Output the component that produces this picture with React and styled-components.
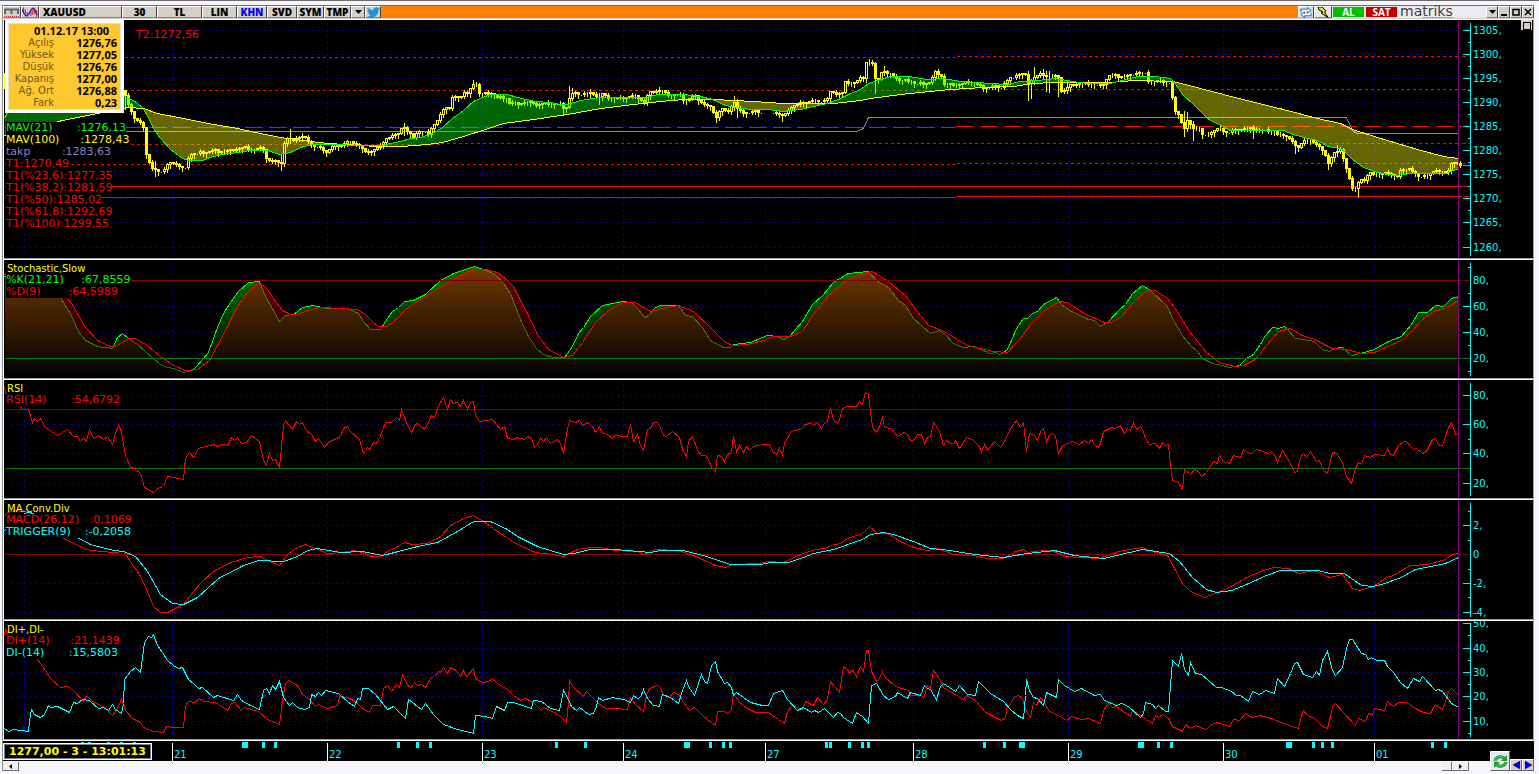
import React from "react";
import styled, { createGlobalStyle } from "styled-components";

const mav21 =
  "4,118 8,110 60,80 120,92 124,96 133,100 142,107 148,117 153,128 160,138 170,149 182,158 188,160 202,160 213,156 222,154 237,152 250,150 267,150 279,154 290,152 303,146 313,144 333,144 360,145 380,145 400,141 410,138 420,137 432,133 442,127 452,118 463,110 473,101 482,97 490,94 507,94 517,97 535,101 550,102 560,104 567,104 580,100 600,97 630,97 645,97 658,94 683,94 700,96 712,99 725,105 740,108 753,109 767,109 783,111 800,109 813,106 827,103 838,99 850,93 860,89 868,83 880,79 890,76 908,76 927,79 943,78 960,81 977,82 990,83 1007,84 1020,81 1037,80 1055,78 1072,81 1087,83 1110,83 1125,79 1138,76 1155,76 1170,78 1175,84 1183,95 1193,104 1200,111 1207,118 1222,126 1230,130 1257,130 1283,130 1293,134 1307,138 1317,140 1327,146 1340,148 1345,152 1352,159 1363,167 1377,172 1395,175 1410,173 1447,173 1452,170 1458,169";
const mav100 =
  "4,135 62,120 97,113 127,107 143,108 157,113 183,118 213,124 237,128 255,132 280,137 310,141 328,143 360,145 377,146 400,146 415,145 427,144 442,142 463,136 482,130 503,123 533,119 567,114 600,108 633,104 660,101 683,99 713,99 753,101 783,103 800,103 833,103 860,100 870,98 900,94 950,89 983,87 1013,86 1033,83 1053,82 1077,82 1110,82 1133,80 1173,81 1200,88 1223,94 1250,101 1283,109 1317,118 1340,123 1352,129 1377,137 1417,149 1443,156 1458,158";
const takp =
  "4,131 856,131 861,129 863,128 868,117 1346,117 1350,126 1353,131 1357,133 1458,133";
const closes =
  "122,92 126,100 129,108 133,118 138,122 142,126 144,150 148,162 150,168 153,170 160,170 164,168 167,163 173,162 178,166 184,168 186,158 189,154 196,153 205,151 212,150 222,151 232,149 243,147 252,149 262,148 264,157 270,161 277,161 281,163 283,143 286,138 292,139 300,136 306,139 311,145 318,147 325,151 331,146 340,144 347,141 354,143 360,146 363,152 370,150 379,146 384,138 390,136 396,134 400,127 403,127 407,133 412,136 415,132 420,131 427,133 430,127 435,122 440,113 443,105 448,108 450,97 455,97 462,95 463,92 468,95 470,83 475,83 477,93 482,93 492,92 495,97 507,97 508,103 532,102 533,105 540,104 547,103 560,104 563,109 567,103 569,93 580,93 593,93 597,97 600,93 605,97 620,98 630,95 637,97 643,102 647,93 655,90 662,90 665,94 678,94 683,100 688,98 693,95 698,100 703,104 710,107 715,116 720,108 725,112 733,102 737,111 747,112 760,111 772,111 777,114 783,116 788,107 800,103 807,101 825,100 830,90 835,93 842,92 843,82 853,82 863,76 865,61 871,63 873,79 878,78 881,68 885,73 893,75 897,80 910,80 913,83 923,83 930,81 933,71 940,75 943,84 960,84 967,81 973,82 980,87 1000,86 1007,80 1013,75 1023,73 1027,82 1033,77 1040,73 1047,76 1057,76 1059,91 1065,90 1067,85 1077,83 1090,83 1100,86 1107,75 1127,76 1133,72 1145,73 1147,80 1170,82 1172,112 1178,113 1182,130 1186,120 1190,127 1198,128 1202,137 1208,132 1217,128 1227,132 1237,129 1247,128 1273,131 1278,136 1283,133 1290,140 1295,148 1302,140 1313,141 1320,148 1327,162 1332,152 1340,150 1343,160 1347,175 1352,192 1355,188 1358,177 1363,180 1368,173 1380,174 1387,172 1397,177 1400,168 1408,168 1413,174 1427,176 1433,169 1445,173 1450,162 1455,162 1459,166";
const spikes = [
  [125, 89, 108], [153, 160, 175], [279, 153, 169], [283, 142, 165], [289, 128, 142],
  [301, 132, 140], [402, 122, 134], [472, 79, 84], [563, 103, 113], [569, 85, 103],
  [572, 87, 95], [588, 88, 94], [598, 92, 103], [657, 86, 91], [714, 110, 121],
  [733, 95, 107], [737, 98, 116], [782, 112, 120], [868, 58, 64], [875, 76, 92],
  [884, 65, 74], [936, 68, 76], [1027, 70, 99], [1030, 78, 97], [1033, 66, 80],
  [1042, 68, 78], [1045, 70, 90], [1049, 70, 91], [1058, 76, 95], [1066, 80, 92],
  [1184, 110, 135], [1187, 111, 125], [1191, 120, 139], [1252, 124, 137],
  [1295, 145, 152], [1327, 155, 168], [1356, 180, 196], [1337, 144, 155],
];

const stochK =
  "4,276 45,283 60,297 65,305 72,317 78,331 85,340 97,346 112,348 117,337 122,333 128,338 137,344 153,358 160,364 167,367 173,368 183,372 192,370 197,365 202,359 208,352 213,338 217,327 223,313 230,302 238,291 248,282 259,281 265,296 272,308 279,321 285,315 293,314 302,307 312,305 327,308 347,308 358,313 363,321 370,329 380,329 385,321 392,311 398,307 404,301 413,300 425,294 440,280 453,273 465,269 474,266 483,269 495,274 503,283 510,293 520,319 528,336 536,348 543,354 553,357 564,357 572,346 578,333 583,327 590,316 602,305 622,301 631,302 638,309 644,317 648,315 655,307 660,305 678,305 685,315 692,316 702,327 710,340 723,347 730,347 733,344 750,342 767,335 777,336 783,339 789,336 802,321 812,304 822,295 833,282 848,273 868,271 877,281 888,287 898,300 905,305 913,318 930,333 939,330 945,334 953,343 963,347 973,346 990,353 995,352 1000,354 1007,349 1011,340 1016,328 1023,318 1027,318 1032,313 1037,311 1043,304 1056,297 1061,304 1069,310 1088,319 1094,320 1100,326 1108,321 1120,308 1125,304 1132,293 1142,285 1150,290 1167,306 1172,318 1182,335 1190,345 1197,351 1202,358 1212,363 1222,365 1229,367 1239,365 1246,358 1253,354 1260,344 1265,335 1272,327 1278,328 1284,326 1288,330 1295,338 1303,339 1314,341 1322,349 1329,351 1334,348 1342,347 1351,355 1357,354 1374,349 1388,341 1401,336 1411,324 1418,312 1427,312 1435,305 1443,306 1451,298 1458,296";
const stochD =
  "4,274 50,283 66,297 72,304 78,315 85,327 97,340 110,346 115,346 128,338 135,338 147,345 160,356 173,365 185,370 197,369 209,360 218,343 227,326 237,306 247,292 258,283 265,286 273,298 282,310 290,314 297,314 307,310 320,307 340,308 357,309 365,314 372,321 378,326 387,326 398,317 405,309 417,301 435,290 453,279 473,269 485,269 497,272 507,280 513,286 520,300 527,313 537,334 548,349 563,357 572,355 582,342 595,322 607,311 622,302 635,302 650,311 667,307 678,305 693,311 710,327 725,342 733,345 747,344 763,340 773,336 790,336 802,331 813,314 827,296 845,281 858,274 872,271 888,281 905,295 913,306 928,325 942,330 967,345 993,351 1007,352 1015,343 1020,338 1030,324 1044,310 1059,301 1067,302 1084,313 1104,322 1111,322 1121,316 1133,302 1145,291 1155,290 1167,298 1177,311 1189,331 1206,352 1219,362 1234,366 1243,365 1255,359 1266,345 1278,331 1290,328 1302,335 1314,339 1332,348 1346,349 1361,353 1374,352 1403,339 1411,331 1421,320 1433,311 1445,308 1458,300";

const rsi =
  "4,387 5,392 7,396 12,405 16,402 20,406 22,409 28,409 32,422 34,418 37,421 40,418 45,427 57,435 67,429 73,436 77,436 80,441 83,437 86,441 89,429 93,438 98,435 103,439 107,436 112,444 115,433 118,425 121,431 125,455 130,467 134,468 140,473 144,487 153,492 157,488 163,486 167,476 173,477 183,479 185,458 189,452 193,457 198,448 213,444 217,446 221,444 227,445 231,437 234,440 237,437 241,443 246,442 251,435 259,441 263,460 266,465 269,453 272,460 275,459 279,467 283,425 285,420 292,429 296,421 299,424 302,422 305,429 312,435 315,441 318,438 324,447 328,442 340,436 343,428 347,426 350,431 359,439 363,453 367,447 369,449 373,442 376,443 379,438 385,422 391,422 396,417 399,420 401,409 408,427 411,432 415,424 417,423 421,427 425,428 431,415 434,417 438,405 443,397 447,409 450,399 453,403 457,402 460,406 463,400 467,409 470,402 473,401 475,415 479,421 492,419 500,429 504,426 507,438 513,439 517,437 524,439 527,436 531,438 534,447 537,444 540,437 543,441 546,437 550,443 557,439 560,443 563,453 566,434 569,420 575,422 579,420 582,425 588,422 592,426 595,432 599,426 601,432 607,434 612,438 615,434 621,436 627,436 630,424 633,441 637,434 640,445 643,450 647,429 650,428 653,422 657,422 659,425 663,435 666,436 672,431 679,437 682,449 686,456 688,441 692,436 697,450 701,455 705,455 708,459 711,467 715,471 717,455 721,456 724,461 727,454 731,452 733,436 736,451 739,445 743,452 746,446 749,450 753,446 763,444 769,444 772,451 776,454 779,448 782,455 784,443 791,431 802,428 804,425 810,422 813,425 817,422 821,428 824,423 827,421 830,407 833,420 837,423 839,420 842,408 847,406 856,406 859,401 862,404 865,392 868,394 872,427 876,432 879,426 882,417 884,427 891,428 897,436 904,432 907,434 910,440 913,440 917,434 921,434 924,443 927,437 930,436 933,422 939,431 943,445 946,440 950,443 953,443 955,440 959,448 966,437 972,439 978,445 981,451 984,444 987,450 994,441 1000,447 1004,441 1010,428 1016,420 1020,427 1023,422 1026,451 1029,433 1034,435 1037,440 1040,431 1043,428 1046,441 1049,435 1052,433 1055,435 1058,453 1062,445 1072,441 1079,444 1084,440 1088,443 1091,439 1094,444 1098,447 1100,443 1103,431 1111,427 1115,428 1120,425 1124,433 1127,428 1130,430 1133,422 1136,429 1140,426 1142,429 1146,440 1149,444 1155,443 1159,448 1162,442 1165,445 1168,444 1170,466 1172,480 1177,481 1182,489 1184,469 1190,474 1194,469 1198,471 1201,476 1206,472 1213,461 1217,463 1219,455 1223,461 1229,463 1233,455 1240,457 1243,449 1249,453 1252,453 1256,449 1268,453 1271,451 1274,454 1277,462 1282,450 1290,463 1294,472 1297,471 1300,457 1303,453 1306,457 1310,451 1316,461 1319,460 1323,470 1327,473 1332,452 1336,453 1342,462 1346,476 1351,483 1355,468 1358,462 1361,464 1364,455 1370,457 1374,454 1384,455 1387,448 1390,454 1393,455 1398,445 1403,441 1406,441 1410,446 1413,449 1416,448 1422,453 1426,451 1432,439 1435,438 1438,445 1442,445 1448,427 1451,422 1455,434 1458,433";

const macd =
  "4,516 7,512 15,510 30,512 62,537 85,549 100,551 115,552 123,551 130,561 139,574 147,591 153,606 160,612 167,612 183,604 193,591 200,583 213,571 230,562 247,557 260,556 267,560 279,565 288,553 297,547 305,544 315,548 327,553 342,552 353,550 362,552 370,556 380,556 388,550 398,546 404,542 412,544 427,543 440,536 450,525 463,518 473,515 483,521 500,533 515,543 535,552 553,554 563,556 577,549 590,547 600,547 615,550 637,551 644,554 655,549 678,550 693,555 715,565 725,567 733,564 760,563 767,561 783,562 800,554 815,549 825,548 830,545 840,543 847,538 862,533 869,526 877,533 887,533 900,541 913,547 927,550 937,548 953,554 973,555 987,558 1003,558 1015,551 1023,549 1027,552 1042,550 1054,551 1064,556 1099,558 1118,551 1142,547 1155,552 1167,555 1174,568 1182,583 1190,591 1204,597 1219,591 1229,587 1246,577 1260,571 1273,567 1288,568 1298,573 1314,570 1329,577 1342,574 1352,588 1359,590 1373,586 1386,577 1393,575 1410,565 1428,564 1437,561 1443,560 1452,554 1458,553";
const trigger =
  "4,530 26,512 30,512 60,527 77,537 90,544 113,550 123,551 135,556 147,571 160,594 172,603 183,604 197,597 218,578 243,565 258,560 283,561 297,556 307,550 317,548 340,552 362,551 382,555 398,551 417,546 437,542 457,531 473,521 490,521 507,529 517,536 537,546 563,554 573,553 590,549 615,549 650,552 660,550 682,550 703,555 730,564 760,564 770,562 788,562 803,557 813,553 833,549 862,539 870,534 883,532 893,534 913,541 930,548 950,550 967,553 983,555 1003,557 1027,553 1054,550 1074,555 1103,558 1142,549 1169,553 1179,561 1192,577 1206,589 1216,592 1231,590 1246,584 1266,575 1280,570 1317,570 1330,573 1344,573 1361,585 1373,586 1384,583 1401,577 1415,569 1445,563 1458,557";

const diPlus =
  "4,636 5,628 7,634 20,646 37,659 45,670 50,678 60,687 67,686 73,690 83,701 86,695 92,701 103,706 112,715 117,708 121,699 125,710 132,718 140,722 143,727 153,731 163,732 166,726 173,727 183,727 185,705 188,701 194,702 199,698 203,701 215,702 227,710 231,703 234,702 241,710 244,707 258,711 267,719 279,724 282,701 285,683 288,680 297,685 302,694 308,698 315,706 318,704 327,708 337,705 339,696 347,697 355,701 362,708 369,712 372,705 380,705 383,688 387,685 391,691 396,684 399,687 402,675 408,686 411,687 414,682 417,685 421,684 425,687 431,677 434,676 438,671 440,672 443,667 447,673 450,667 456,670 460,676 463,670 466,676 473,668 475,678 482,682 488,681 492,678 497,683 507,689 513,695 520,700 525,698 533,702 541,710 543,707 550,710 560,716 566,722 568,701 569,680 573,687 583,696 586,691 597,702 605,708 615,708 627,709 630,697 635,704 643,711 646,695 649,688 657,685 660,687 663,695 669,697 673,692 678,694 683,702 689,710 694,707 703,716 715,725 717,711 724,711 727,713 731,709 733,693 739,702 747,708 755,712 768,712 775,717 784,723 787,711 792,705 802,709 805,701 813,705 817,697 823,704 827,699 830,681 839,692 843,666 847,669 849,673 852,669 856,676 860,666 863,671 866,650 868,650 871,671 876,681 879,678 882,671 884,676 895,686 908,690 911,695 921,695 923,698 927,685 930,688 933,670 939,678 943,687 953,693 963,699 966,695 975,700 985,712 1001,720 1005,717 1007,705 1010,704 1013,697 1018,695 1022,698 1026,711 1030,717 1033,702 1036,705 1040,697 1043,701 1049,711 1056,714 1066,720 1071,716 1081,719 1088,718 1100,723 1103,710 1108,703 1112,707 1116,706 1130,716 1132,710 1140,715 1152,723 1155,715 1158,717 1162,714 1168,718 1172,726 1182,731 1185,724 1190,728 1195,725 1206,729 1211,724 1217,722 1229,726 1233,719 1239,720 1245,713 1252,717 1259,715 1271,718 1283,723 1298,728 1300,718 1303,710 1307,715 1313,717 1322,726 1327,728 1330,716 1332,706 1335,703 1342,711 1355,725 1358,718 1365,721 1368,713 1372,714 1374,708 1384,710 1387,701 1393,706 1398,702 1406,702 1415,708 1423,712 1430,713 1433,707 1435,704 1442,709 1445,701 1448,691 1451,688 1458,695";
const diMinus =
  "4,728 8,731 13,729 28,731 29,721 31,709 34,714 40,717 44,714 48,705 50,707 57,706 69,712 73,702 77,703 82,699 89,700 98,708 103,707 108,710 112,704 115,709 121,713 123,703 124,679 130,671 135,667 140,672 144,642 148,636 151,637 153,634 157,645 162,652 167,660 173,665 178,668 182,667 188,679 193,683 198,688 202,687 213,697 217,695 233,700 237,694 241,700 250,705 259,709 263,690 266,688 269,693 272,685 275,689 279,681 283,697 289,705 292,702 297,707 304,709 309,707 311,694 315,696 318,692 321,695 325,690 338,693 347,701 354,706 357,698 360,699 362,688 368,688 375,694 387,709 393,706 398,711 405,718 408,699 421,709 425,703 433,714 443,724 457,729 466,731 473,733 475,715 485,716 492,718 496,706 504,710 507,702 513,702 531,708 533,700 541,701 550,708 559,710 563,690 567,697 571,706 576,710 579,707 588,714 593,713 596,706 598,697 602,700 612,697 623,699 630,702 633,695 637,698 640,697 643,689 647,698 653,705 659,706 662,694 670,697 678,703 682,690 686,680 688,686 694,695 701,674 704,681 707,683 711,665 715,661 717,671 724,683 727,682 731,687 733,695 736,692 750,702 762,705 768,705 773,693 782,690 787,699 797,710 803,707 811,712 814,710 818,712 824,708 833,717 837,712 840,713 843,717 852,723 856,712 862,716 868,723 871,685 876,683 883,695 888,699 895,696 897,692 907,698 910,692 920,695 924,685 927,688 930,689 936,699 940,686 943,683 955,691 959,685 967,694 975,695 978,681 990,693 1003,701 1010,709 1017,715 1023,718 1025,695 1026,679 1029,690 1033,697 1037,698 1043,705 1046,692 1056,697 1058,679 1064,685 1074,691 1081,688 1094,695 1100,694 1104,700 1116,705 1121,703 1128,706 1140,717 1143,713 1145,702 1152,704 1155,708 1158,705 1165,711 1168,711 1170,685 1172,660 1178,666 1181,653 1184,669 1188,675 1190,662 1195,673 1201,674 1216,687 1221,687 1231,691 1236,695 1240,695 1248,701 1252,691 1259,694 1265,690 1274,693 1277,678 1284,686 1290,673 1294,663 1297,662 1303,674 1312,677 1316,671 1319,675 1322,660 1327,651 1332,670 1335,675 1342,667 1346,648 1349,639 1352,639 1361,653 1365,654 1368,659 1371,657 1376,660 1384,660 1387,666 1393,672 1400,682 1407,688 1413,678 1419,681 1422,676 1435,690 1438,689 1442,691 1451,703 1458,707";

const days = [
  [172, "21"], [327, "22"], [482, "23"], [623, "24"], [765, "27"],
  [913, "28"], [1068, "29"], [1223, "30"], [1374, "01"],
];
const news = [
  [242, 6], [262, 3], [274, 3], [397, 3], [416, 3], [429, 3], [555, 3], [584, 3],
  [684, 6], [709, 3], [722, 3], [729, 3], [825, 3], [829, 3], [848, 3], [861, 3],
  [867, 3], [983, 3], [1003, 3], [1019, 6], [1138, 6], [1157, 3], [1170, 3],
  [1286, 6], [1312, 3], [1321, 3], [1331, 3], [1431, 3], [1444, 3],
];

const parse = (points) => points.split(" ").map((p) => p.split(",").map(Number));

function valueAt(points, x) {
  for (let i = 1; i < points.length; i++) {
    const [x0, y0] = points[i - 1];
    const [x1, y1] = points[i];
    if (x <= x1) return y0 + ((y1 - y0) * (x - x0)) / (x1 - x0);
  }
  return points[points.length - 1][1];
}

// splits the space between two lines wherever they cross
function makeBands(fast, slow) {
  const a = parse(fast);
  const b = parse(slow);
  const bands = [];
  let current = null;
  for (let x = 4; x <= 1458; x++) {
    const ya = valueAt(a, x);
    const yb = valueAt(b, x);
    const up = ya < yb;
    if (!current || current.up !== up) {
      current = { up, top: [], bottom: [] };
      bands.push(current);
    }
    current.top.push(`${x},${ya.toFixed(1)}`);
    current.bottom.unshift(`${x},${yb.toFixed(1)}`);
  }
  return bands;
}

function makeCandles() {
  const line = parse(closes);
  const candles = [];
  let open = 90;
  for (let i = 0; i < 446; i++) {
    const x = 124 + i * 3;
    if (x > 761 && x < 771) continue;
    const noise = ((i * 7919) % 5) - 2;
    const close = Math.round(valueAt(line, x) + noise / 2);
    const up = Math.min(open, close) - ((i * 31) % 4);
    const down = Math.max(open, close) + ((i * 17) % 4);
    const spike = spikes.find((s) => Math.abs(s[0] - x) < 2);
    candles.push({
      x,
      open,
      close,
      high: spike ? Math.min(spike[1], up) : up,
      low: spike ? Math.max(spike[2], down) : down,
    });
    open = close;
  }
  return candles;
}

const bands = makeBands(mav21, mav100);
const candles = makeCandles();

function Line({ points, color }) {
  return <polyline points={points} fill="none" stroke={color} />;
}

function HLine({ y, color, dash, from = 4, to = 1462 }) {
  return <path d={`M${from} ${y}H${to}`} stroke={color} strokeDasharray={dash} />;
}

function Grid({ top, height, rows }) {
  return (
    <g stroke="#000098" strokeDasharray="3 3">
      {[24, ...days.map((d) => d[0])].map((x) => (
        <path key={x} d={`M${x} ${top + 2}V${top + height - 2}`} />
      ))}
      {rows.map((y) => (
        <path key={y} d={`M10 ${y}H1458`} />
      ))}
    </g>
  );
}

function Panel({ top, height, rows, ticks, minor, levels = [], mark, legend, children }) {
  return (
    <PanelBox>
      <Plot viewBox={`4 ${top} 1458 ${height}`} preserveAspectRatio="none" $height={height}>
        <g transform="translate(0.5 0.5)" strokeWidth="1">
          <Grid top={top} height={height} rows={rows || ticks.map((t) => t[0])} />
          {children}
          <path d={`M1458 ${top - 1}V${top + height}`} stroke="#800080" />
        </g>
      </Plot>
      <Overlay>{legend}</Overlay>
      <Axis viewBox={`0 ${top} 71 ${height}`} $height={height}>
        <g transform="translate(0.5 0.5)" stroke="#00ffff">
          {levels.map(([y, color, dash]) => (
            <path key={y} d={`M0 ${y}H8`} stroke={color} strokeDasharray={dash} />
          ))}
          <path d={`M8 ${top + 2}V${top + height - 3}`} />
          {ticks.map(([y, , noTick]) => !noTick && <path key={y} d={`M0 ${y}H8`} />)}
          {minor.map((y) => (
            <path key={y} d={`M5 ${y}H8`} />
          ))}
          {mark && <path d={`M0 ${mark}H7`} stroke="#00ff00" />}
        </g>
        {ticks.map(([y, text]) => (
          <text key={y} x="11" y={y + 4}>
            {text}
          </text>
        ))}
      </Axis>
    </PanelBox>
  );
}

function Candles() {
  return (
    <g stroke="#ffff00">
      <path d="M4 72V88" />
      {candles.map(({ x, open, close, high, low }) => {
        const y = Math.min(open, close);
        const h = Math.abs(open - close);
        return (
          <g key={x}>
            <path d={`M${x + 1} ${high}V${low + 1}`} />
            <rect x={x} y={y} width="2" height={h} fill={close < open ? "#000" : "#ff0"} />
          </g>
        );
      })}
    </g>
  );
}

const priceLevels = [
  [57, 56, 956, "3 3"],
  [90, 89, 956, "3 3"],
  [127, 126, 955, "18 6"],
  [144, 143, 440, "3 3"],
  [164, 163, 956, "3 3"],
  [186, 186, 956],
  [197, 196, 955],
];

const quote = [
  ["Açılış", "1276,76"],
  ["Yüksek", "1277,05"],
  ["Düşük", "1276,76"],
  ["Kapanış", "1277,00"],
  ["Ağ. Ort", "1276,88"],
  ["Fark", "0,23"],
];

const priceLegend = [
  ["MAV(21)       :1276,13", "#00ff00"],
  ["MAV(100)      :1278,43", "#ffff00"],
  ["takp         :1283,63", "#8484c6"],
  ["T1:1270,49", "#ff0000"],
  ["T1(%23,6):1277,35", "#ff0000"],
  ["T1(%38,2):1281,59", "#ff0000"],
  ["T1(%50):1285,02", "#ff0000"],
  ["T1(%61,8):1292,69", "#ff0000"],
  ["T1(%100):1299,55", "#ff0000"],
];

function Legend({ title, rows }) {
  return (
    <LegendBox>
      <LegendTitle>{title}</LegendTitle>
      {rows.map(([text, color]) => (
        <LegendRow key={text} $color={color}>
          {text}
        </LegendRow>
      ))}
    </LegendBox>
  );
}

function Toolbar() {
  return (
    <Bar>
      <ToolButton $width={18} aria-label="Chart type">
        <svg width="16" height="11" viewBox="0 0 16 11">
          <path d="M1 7V2.500H14V7M7.500 2.500V7" fill="none" stroke="#666" strokeWidth="2" />
          <path d="M0 9.500H15" stroke="#c33" strokeDasharray="1 1" />
        </svg>
      </ToolButton>
      <ToolButton $width={18} aria-label="Indicators">
        <svg width="17" height="11" viewBox="0 0 17 11">
          <path d="M1.500 0V6M3.500 2V8M5.500 5V10M9.500 4V9M11.500 2V8M13.500 1V7M15.500 3V10" stroke="#e00000" />
          <path d="M0 2C4 12 6 10 9 4S13 2 16 8" fill="none" stroke="#1030d0" strokeWidth="1.500" />
        </svg>
      </ToolButton>
      <ToolButton $width={83} $left>XAUUSD</ToolButton>
      <ToolButton $width={35}>30</ToolButton>
      <ToolButton $width={45}>TL</ToolButton>
      <ToolButton $width={35}>LIN</ToolButton>
      <ToolButton $width={30} $color="#0000ff">KHN</ToolButton>
      <ToolButton $width={30}>SVD</ToolButton>
      <ToolButton $width={27}>SYM</ToolButton>
      <ToolButton $width={27}>TMP</ToolButton>
      <ToolButton $width={14} aria-label="Templates">
        <svg width="7" height="4" viewBox="0 0 7 4"><path d="M0 0H7L3.500 4Z" /></svg>
      </ToolButton>
      <ToolButton $width={16} aria-label="Share">
        <svg width="13" height="11" viewBox="0 0 24 20">
          <path
            d="M24 2.400c-.9.400-1.800.7-2.800.8 1-.6 1.800-1.600 2.200-2.700-1 .6-2 1-3.100 1.200A4.900 4.900 0 0 0 11.900 6C7.800 5.800 4.200 3.800 1.700.9a4.900 4.900 0 0 0 1.500 6.500C2.400 7.400 1.600 7.200 1 6.800c0 2.300 1.600 4.400 3.900 4.900-.7.200-1.500.2-2.200.1.600 2 2.400 3.400 4.600 3.400A9.900 9.900 0 0 1 0 17.300 14 14 0 0 0 7.500 19.500c9.100 0 14.300-7.700 14-14.600 1-.7 1.800-1.600 2.500-2.500z"
            fill="#2a8fd8"
          />
        </svg>
      </ToolButton>
      <Ribbon />
      <ToolButton $width={16} $flat aria-label="Refresh">
        <svg width="15" height="11" viewBox="0 0 15 11">
          <rect width="15" height="11" fill="#c8e0f8" />
          <path d="M2 5V2H9V0L13 3.500L9 6V4M13 6V9H6V11L2 7.500L6 5V7" fill="#fff" stroke="#2060b0" />
        </svg>
      </ToolButton>
      <ToolButton $width={18} $flat aria-label="Quick order">
        <svg width="12" height="11" viewBox="0 0 12 11">
          <path d="M1 0L5 0L9 4L7.500 5L11 10.500L4 6L6 5L2 3Z" fill="#e8e000" stroke="#000" strokeWidth="1" />
        </svg>
      </ToolButton>
      <TradeButton $color="#00c000">AL</TradeButton>
      <TradeButton $color="#c00000">SAT</TradeButton>
      <Brand>
        matriks
        <BrandDots />
      </Brand>
      <ToolButton $width={12} aria-label="Menu">
        <svg width="7" height="4" viewBox="0 0 7 4"><path d="M0 0H7L3.500 4Z" /></svg>
      </ToolButton>
      <ToolButton $width={12} aria-label="Minimize">
        <svg width="8" height="8" viewBox="0 0 8 8"><path d="M1 6H7V8H1Z" /></svg>
      </ToolButton>
      <ToolButton $width={12} aria-label="Maximize">
        <svg width="8" height="8" viewBox="0 0 8 8"><path d="M1 1.500H7V7H1ZM1 1.500H7" fill="none" stroke="#000" strokeWidth="1.500" /></svg>
      </ToolButton>
      <ToolButton $width={12} aria-label="Close">
        <svg width="8" height="8" viewBox="0 0 8 8"><path d="M1 1L7 7M7 1L1 7" stroke="#000" strokeWidth="1.500" /></svg>
      </ToolButton>
    </Bar>
  );
}

const percent = (x) => `${((x - 4) / 1530) * 100}%`;

function Timeline() {
  return (
    <TimeRow>
      <TimeScale>
        {news.map(([x, w]) => (
          <rect key={x} x={percent(x)} y="1" width={w} height="6" fill="#0ff" />
        ))}
        {[81, 88, 107, 120, 133].map((x) => (
          <rect key={x} x={percent(x)} y="1" width="3" height="1" fill="#0ff" />
        ))}
        {days.map(([x, label]) => (
          <React.Fragment key={x}>
            <rect x={percent(x)} y="2" width="1" height="18" fill="#fff" />
            <text x={percent(x + 2)} y="17">
              {label}
            </text>
          </React.Fragment>
        ))}
      </TimeScale>
      <LastTrade>1277,00 - 3 - 13:01:13</LastTrade>
    </TimeRow>
  );
}

export default function App() {
  return (
    <Page>
      <GlobalStyle />
      <Window>
        <Toolbar />
        <Panel
          top={20}
          height={238}
          ticks={[
            [30, "1305,"], [54, "1300,"], [78, "1295,"], [102, "1290,"], [126, "1285,"],
            [150, "1280,"], [174, "1275,"], [198, "1270,"], [222, "1265,"], [247, "1260,"],
          ]}
          minor={[42, 66, 90, 114, 138, 162, 186, 210, 234]}
          levels={priceLevels.map(([, y, , dash]) => [y, "#ff0000", dash])}
          mark={165}
          legend={
            <>
              <QuoteBox>
                <caption>01.12.17 13:00</caption>
                <tbody>
                  {quote.map(([name, value]) => (
                    <tr key={name}>
                      <th scope="row">{name}</th>
                      <td>{value}</td>
                    </tr>
                  ))}
                </tbody>
              </QuoteBox>
              <PriceLegend>
                {priceLegend.map(([text, color]) => (
                  <LegendRow key={text} $color={color}>
                    {text}
                  </LegendRow>
                ))}
              </PriceLegend>
              <TargetLabel>T2:1272,56</TargetLabel>
              <Restore aria-label="Restore panel" />
            </>
          }
        >
          {priceLevels.map(([y, next, x, dash]) => (
            <React.Fragment key={y}>
              <HLine y={y} to={x} color="#ff0000" dash={dash} />
              <HLine y={next} from={x} color="#ff0000" dash={dash} />
            </React.Fragment>
          ))}
          <Line points={takp} color="#8484c6" />
          <Candles />
          {bands.map(({ up, top, bottom }) => (
            <polygon
              key={top[0]}
              points={[...top, ...bottom].join(" ")}
              fill={up ? "#00ff00" : "#ffff00"}
              fillOpacity="0.4"
            />
          ))}
          <Line points={mav100} color="#ffff00" />
          <Line points={mav21} color="#00ff00" />
        </Panel>

        <Panel
          top={260}
          height={118}
          rows={[306, 332]}
          ticks={[[280, "80,", true], [306, "60,"], [332, "40,"], [358, "20,", true]]}
          minor={[267, 293, 319, 345, 371]}
          levels={[[280, "#800000"], [358, "#008000"]]}
          legend={
            <Legend
              title="Stochastic,Slow"
              rows={[
                ["%K(21,21)     :67,8559", "#00ff00"],
                ["%D(9)        :64,5989", "#ff0000"],
              ]}
            />
          }
        >
          <defs>
            <linearGradient id="fadeGreen" gradientUnits="userSpaceOnUse" x1="0" y1="262" x2="0" y2="378">
              <stop offset="0" stopColor="#00e800" />
              <stop offset="1" stopColor="#000" />
            </linearGradient>
            <linearGradient id="fadeRed" gradientUnits="userSpaceOnUse" x1="0" y1="262" x2="0" y2="378">
              <stop offset="0" stopColor="#e80000" />
              <stop offset="1" stopColor="#000" />
            </linearGradient>
          </defs>
          <polygon points={`${stochK} 1458,378 4,378`} fill="url(#fadeGreen)" fillOpacity="0.5" />
          <Line points={stochK} color="#00ff00" />
          <polygon points={`${stochD} 1458,378 4,378`} fill="url(#fadeRed)" fillOpacity="0.5" />
          <Line points={stochD} color="#ff0000" />
          <HLine y={280} color="#800000" />
          <HLine y={358} color="#008000" />
        </Panel>

        <Panel
          top={380}
          height={118}
          ticks={[[395, "80,"], [424, "60,"], [453, "40,"], [483, "20,"]]}
          minor={[439]}
          levels={[[409, "#800000"], [468, "#008000"]]}
          legend={<Legend title="RSI" rows={[["RSI(14)       :54,6792", "#ff0000"]]} />}
        >
          <HLine y={409} color="#800000" />
          <HLine y={468} color="#008000" />
          <Line points={rsi} color="#ff0000" />
        </Panel>

        <Panel
          top={500}
          height={119}
          rows={[525, 583, 612]}
          ticks={[[525, "2,"], [554, "0", true], [583, "-2,"], [612, "-4,"]]}
          minor={[511, 540, 569, 597]}
          levels={[[554, "#800000"]]}
          legend={
            <Legend
              title="MA.Conv.Div"
              rows={[
                ["MACD(26,12)   :0,1069", "#ff0000"],
                ["TRIGGER(9)    :-0,2058", "#00ffff"],
              ]}
            />
          }
        >
          <HLine y={554} color="#800000" />
          <Line points={macd} color="#ff0000" />
          <Line points={trigger} color="#00ffff" />
        </Panel>

        <Panel
          top={621}
          height={118}
          ticks={[[623, "50,"], [648, "40,"], [672, "30,"], [696, "20,"], [721, "10,"]]}
          minor={[635, 660, 684, 708, 733]}
          legend={
            <Legend
              title="DI+,DI-"
              rows={[
                ["DI+(14)      :21,1439", "#ff0000"],
                ["DI-(14)       :15,5803", "#00ffff"],
              ]}
            />
          }
        >
          <Line points={diPlus} color="#ff0000" />
          <Line points={diMinus} color="#00ffff" />
        </Panel>

        <Timeline />
        <ScrollRow>
          <ScrollButton $width={16} aria-label="Scroll left">
            <svg width="3" height="5" viewBox="0 0 3 5"><path d="M3 0V5L0 2.500Z" /></svg>
          </ScrollButton>
          <Track />
          <ScrollButton $width={10} aria-label="Scroll position" />
          <ScrollButton $width={17} aria-label="Scroll right">
            <svg width="3" height="5" viewBox="0 0 3 5"><path d="M0 0V5L3 2.500Z" /></svg>
          </ScrollButton>
          <Spacer />
          <ReloadButton aria-label="Reload">
            <svg width="15" height="15" viewBox="0 0 15 15">
              <path d="M2 7A5.500 5 0 0 1 11 4M13 8A5.500 5 0 0 1 4 11" fill="none" stroke="#0a7a20" strokeWidth="3" />
              <path d="M2 7A5.500 5 0 0 1 11 4M13 8A5.500 5 0 0 1 4 11" fill="none" stroke="#4fc860" strokeWidth="1.500" />
              <path d="M14 1V7H8ZM1 14V8H7Z" fill="#1c9a38" />
            </svg>
          </ReloadButton>
          <PageButton aria-label="Previous">
            <svg width="7" height="8" viewBox="0 0 7 8"><path d="M7 0V8L0 4Z" fill="#0000f0" stroke="#000040" strokeWidth=".5" /></svg>
          </PageButton>
          <PageButton aria-label="Next">
            <svg width="7" height="8" viewBox="0 0 7 8"><path d="M0 0V8L7 4Z" fill="#0000f0" stroke="#000040" strokeWidth=".5" /></svg>
          </PageButton>
        </ScrollRow>
      </Window>
    </Page>
  );
}

const GlobalStyle = createGlobalStyle`
  * {
    box-sizing: border-box;
  }
  body {
    margin: 0;
    background: #f4f6fb;
    font-family: "DejaVu Sans", sans-serif;
    font-size: 11px;
  }
  button {
    margin: 0;
    padding: 0;
    border: none;
    font-family: inherit;
  }
`;

const Page = styled.div`
  min-height: 100vh;
  border-top: 1px solid #6e6a6e;
  padding: 4px 5px 0 2px;
`;

const Window = styled.main`
  display: flex;
  flex-direction: column;
  border-top: 1px solid #706c70;
  border-left: 1px solid #909090;
`;

const Bar = styled.header`
  display: flex;
  height: 13px;
  background: #d4d0c8;
  border-bottom: 1px solid #d4d0c8;
`;

const ToolButton = styled.button`
  display: flex;
  flex: none;
  align-items: center;
  justify-content: ${(p) => (p.$left ? "flex-start" : "center")};
  width: ${(p) => p.$width}px;
  padding-left: ${(p) => (p.$left ? 3 : 0)}px;
  background: ${(p) => (p.$flat ? "#e8e6ea" : "#d4d0c8")};
  border-left: 1px solid #fff;
  border-top: 1px solid #fff;
  border-right: 1px solid #404040;
  border-bottom: 1px solid #808080;
  color: ${(p) => p.$color || "#000"};
  font-family: "Open Sans", sans-serif;
  font-size: 10px;
  font-weight: 800;
  line-height: 10px;
`;

const Ribbon = styled.div`
  flex: 1;
  background: #ff8000;
`;

const TradeButton = styled.button`
  flex: none;
  width: 33px;
  background: ${(p) => p.$color};
  border: 1px solid #e8e6ea;
  color: #fff;
  font-family: "Open Sans", sans-serif;
  font-size: 10px;
  font-weight: 700;
  line-height: 9px;
`;

const Brand = styled.div`
  position: relative;
  flex: none;
  width: 88px;
  padding-left: 2px;
  background: #ececee;
  color: #404044;
  font-size: 14px;
  line-height: 11px;
`;

const BrandDots = styled.span`
  position: absolute;
  left: 25px;
  bottom: 0;
  width: 31px;
  height: 1px;
  background: repeating-linear-gradient(90deg, #ff7020 0 2px, #ffc090 2px 3px);
`;

const PanelBox = styled.section`
  display: grid;
  grid-template-columns: minmax(0, 1fr) 71px;
  background: #000;
  border: 1px solid #fff;
  border-right-color: #a0a0a0;
  border-bottom-color: #a0a0a0;
`;

const Plot = styled.svg`
  display: block;
  grid-area: 1 / 1;
  width: 100%;
  height: ${(p) => p.$height}px;
  shape-rendering: crispEdges;
`;

const Axis = styled.svg`
  display: block;
  grid-area: 1 / 2;
  width: 71px;
  height: ${(p) => p.$height}px;
  shape-rendering: crispEdges;

  text {
    fill: #00ffff;
    font-size: 10px;
  }
`;

const Overlay = styled.div`
  position: relative;
  grid-area: 1 / 1 / 2 / 3;
  height: 0;
`;

const QuoteBox = styled.table`
  width: 119px;
  height: 93px;
  margin-left: 1px;
  padding: 0 2px 3px;
  background: #ffc82e;
  border: 3px solid #fff;
  outline: 1px solid #e0e0e0;
  outline-offset: -4px;
  border-spacing: 0;
  display: flex;
  flex-direction: column;

  caption {
    padding: 2px 0 0 14px;
    font-family: "Open Sans", sans-serif;
    font-size: 11px;
    font-weight: 700;
    line-height: 12px;
  }
  th,
  td {
    height: 12px;
    padding: 0;
    line-height: 12px;
    text-align: right;
  }
  th {
    width: 44px;
    color: #705820;
    font-size: 10px;
    font-weight: 400;
  }
  td {
    width: 63px;
    font-family: "Open Sans", sans-serif;
    font-size: 11px;
    font-weight: 700;
  }
`;

const LegendBox = styled.div`
  display: flex;
  flex-direction: column;
  align-items: flex-start;
  padding: 4px 0 0 2px;
`;

const PriceLegend = styled(LegendBox)`
  padding-top: 9px;
`;

const LegendTitle = styled.div`
  padding-left: 1px;
  color: #ffff00;
  font-size: 10px;
  line-height: 10px;
`;

const LegendRow = styled.div`
  background: #000;
  color: ${(p) => p.$color};
  line-height: 12px;
  white-space: pre;
`;

const TargetLabel = styled.div`
  position: absolute;
  left: 132px;
  top: 9px;
  color: #ff0000;
  line-height: 12px;
`;

const Restore = styled.button`
  position: absolute;
  top: 0;
  right: 1px;
  width: 11px;
  height: 10px;
  background: #d4d0c8;
  border: 2px solid #d4d0c8;

  &::before {
    content: "";
    display: block;
    width: 6px;
    height: 6px;
    border: 1px solid #000;
  }
`;

const TimeRow = styled.div`
  position: relative;
  background: #000;
  border-top: 1px solid #fff;
`;

const TimeScale = styled.svg`
  display: block;
  width: calc(100% - 1px);
  height: 20px;
  margin-left: 1px;
  shape-rendering: crispEdges;

  text {
    fill: #00ffff;
    font-size: 10px;
  }
`;

const LastTrade = styled.output`
  position: absolute;
  left: 0;
  top: 2px;
  height: 17px;
  padding: 0 4px;
  background: #000;
  border: 2px solid #808080;
  outline: 1px solid #fff;
  outline-offset: -1px;
  color: #ffff00;
  font-weight: 700;
  line-height: 13px;
`;

const ScrollRow = styled.div`
  display: flex;
  align-items: flex-end;
  height: 10px;
`;

const ScrollButton = styled.button`
  display: flex;
  align-items: center;
  justify-content: center;
  width: ${(p) => p.$width}px;
  height: 9px;
  background: #f0f0f0;
  border-right: 1px solid #707070;
  border-bottom: 1px solid #707070;
`;

const Track = styled.div`
  flex: 1;
  height: 10px;
  background: repeating-conic-gradient(#ececec 0 25%, #fff 0 50%) 0 0 / 2px 2px;
`;

const Spacer = styled.div`
  width: 21px;
`;

const PageButton = styled.button`
  display: flex;
  flex: none;
  align-items: center;
  justify-content: center;
  position: relative;
  z-index: 1;
  width: 12px;
  height: 12px;
  background: #d4d0c8;
  border: 1px solid #fff;
  border-right-color: #606060;
  border-bottom-color: #606060;
`;

const ReloadButton = styled(PageButton)`
  width: 20px;
  height: 20px;
  background: #e8e8f0;
`;
